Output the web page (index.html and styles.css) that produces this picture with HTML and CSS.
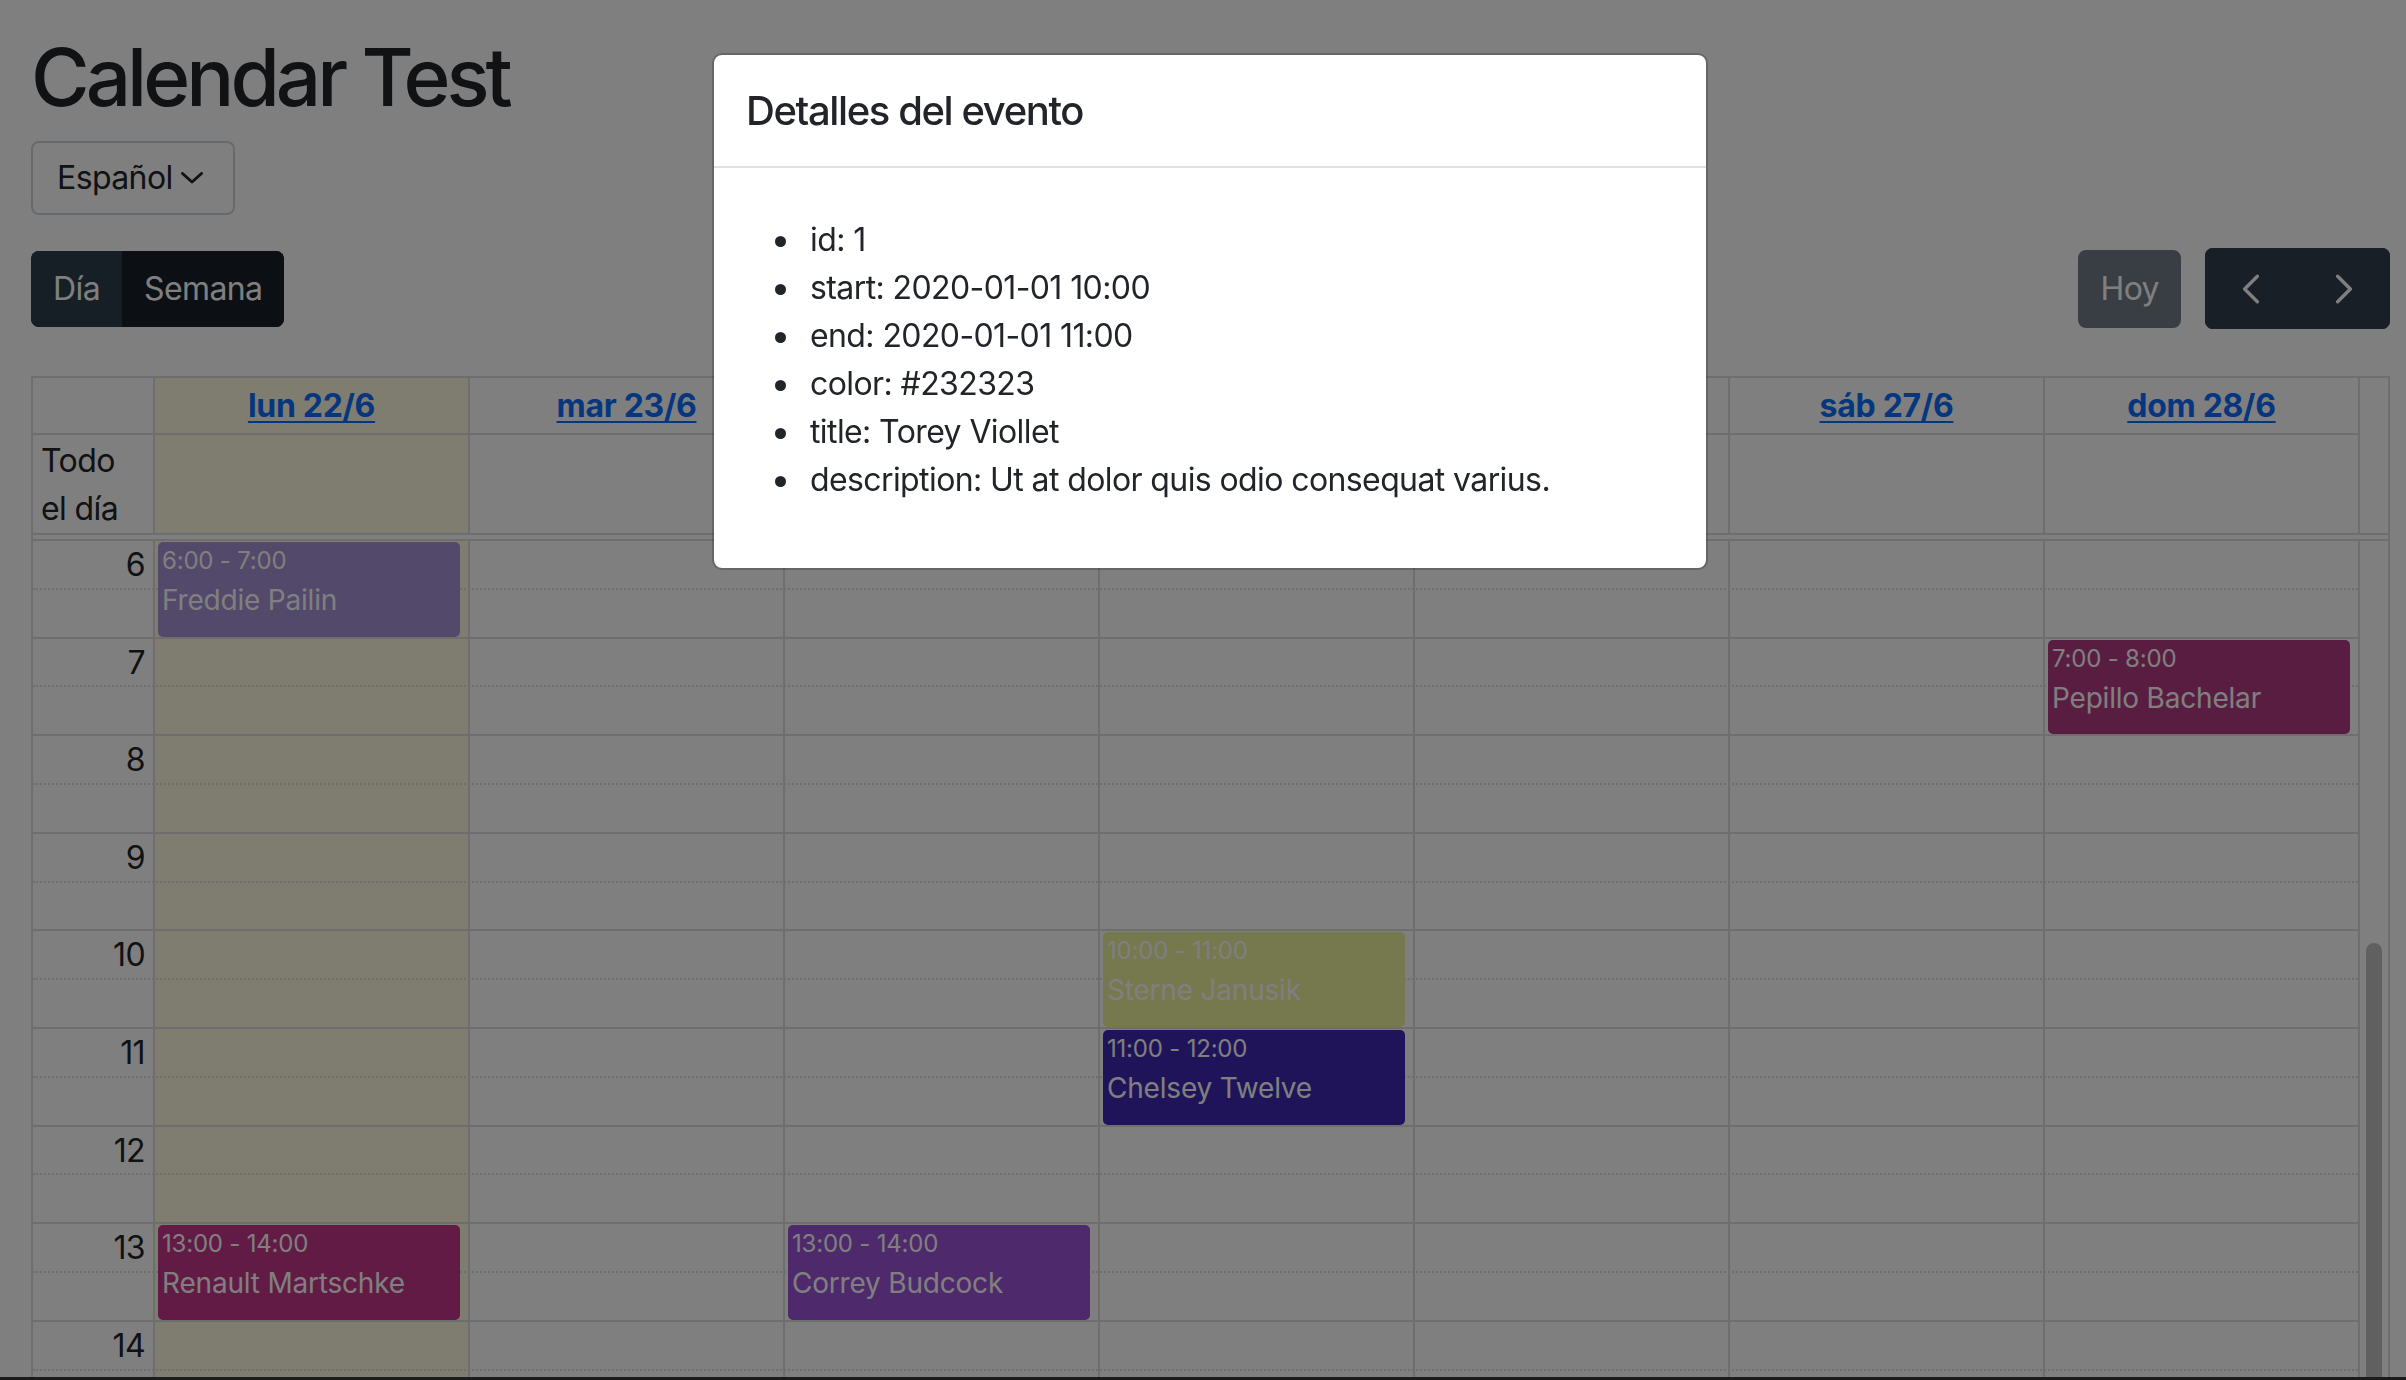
FILE: index.html
```html
<!DOCTYPE html>
<html lang="es">
<head>
<meta charset="utf-8">
<title>Calendar Test</title>
<link rel="stylesheet" href="styles.css">
</head>
<body>
<div class="page">
  <h1 class="title">Calendar Test</h1>
  <div class="select">
    <span>Español</span>
    <svg class="select-chevron" width="22" height="12" viewBox="0 0 22 12"><polyline points="1.5,1.5 11,10 20.5,1.5" fill="none" stroke="#212529" stroke-width="3" stroke-linecap="round" stroke-linejoin="round"/></svg>
  </div>

  <div class="toolbar">
    <div class="btn-group">
      <button class="btn btn-day">Día</button>
      <button class="btn btn-week">Semana</button>
    </div>
    <div class="toolbar-right">
      <button class="btn btn-today">Hoy</button>
      <div class="btn-group nav-group">
        <button class="btn btn-nav" aria-label="Anterior">
          <svg width="34" height="34" viewBox="0 0 16 16"><path fill="#fff" stroke="#fff" stroke-width="0.6" d="M11.354 1.646a.5.5 0 0 1 0 .708L5.707 8l5.647 5.646a.5.5 0 0 1-.708.708l-6-6a.5.5 0 0 1 0-.708l6-6a.5.5 0 0 1 .708 0z"/></svg>
        </button>
        <button class="btn btn-nav" aria-label="Siguiente">
          <svg width="34" height="34" viewBox="0 0 16 16"><path fill="#fff" stroke="#fff" stroke-width="0.6" d="M4.646 1.646a.5.5 0 0 1 .708 0l6 6a.5.5 0 0 1 0 .708l-6 6a.5.5 0 0 1-.708-.708L10.293 8 4.646 2.354a.5.5 0 0 1 0-.708z"/></svg>
        </button>
      </div>
    </div>
  </div>

  <div class="cal">
    <div class="cal-row cal-head">
      <div class="hcell corner"></div>
      <div class="hcell day today"><a href="#">lun 22/6</a></div>
      <div class="hcell day"><a href="#">mar 23/6</a></div>
      <div class="hcell day"><a href="#">mié 24/6</a></div>
      <div class="hcell day"><a href="#">jue 25/6</a></div>
      <div class="hcell day"><a href="#">vie 26/6</a></div>
      <div class="hcell day"><a href="#">sáb 27/6</a></div>
      <div class="hcell day"><a href="#">dom 28/6</a></div>
      <div class="hcell gutter"></div>
    </div>
    <div class="cal-row cal-allday">
      <div class="acell allday-label">Todo<br>el día</div>
      <div class="acell day today"></div>
      <div class="acell day"></div>
      <div class="acell day"></div>
      <div class="acell day"></div>
      <div class="acell day"></div>
      <div class="acell day"></div>
      <div class="acell day"></div>
      <div class="acell gutter"></div>
    </div>
    <div class="cal-divider"></div>
    <div class="cal-body">
      <div class="col k1"></div>
      <div class="col k2 today"></div>
      <div class="col k3"></div>
      <div class="col k4"></div>
      <div class="col k5"></div>
      <div class="col k6"></div>
      <div class="col k7"></div>
      <div class="col k8"></div>

      <div class="slots">
        <div class="slot"></div><div class="slot"></div>
        <div class="slot"></div><div class="slot"></div>
        <div class="slot"></div><div class="slot"></div>
        <div class="slot"></div><div class="slot"></div>
        <div class="slot"></div><div class="slot"></div>
        <div class="slot"></div><div class="slot"></div>
        <div class="slot"></div><div class="slot"></div>
        <div class="slot"></div><div class="slot"></div>
        <div class="slot"></div><div class="slot"></div>
      </div>

      <div class="times">
        <div class="hour">6</div>
        <div class="hour">7</div>
        <div class="hour">8</div>
        <div class="hour">9</div>
        <div class="hour">10</div>
        <div class="hour">11</div>
        <div class="hour">12</div>
        <div class="hour">13</div>
        <div class="hour">14</div>
      </div>

      <div class="event d1 at6 ev-lilac"><div class="ev-time">6:00 - 7:00</div><div class="ev-title">Freddie Pailin</div></div>
      <div class="event d7 at7 ev-plum"><div class="ev-time">7:00 - 8:00</div><div class="ev-title">Pepillo Bachelar</div></div>
      <div class="event d4 at10 ev-lime"><div class="ev-time">10:00 - 11:00</div><div class="ev-title">Sterne Janusik</div></div>
      <div class="event d4 at11 ev-indigo"><div class="ev-time">11:00 - 12:00</div><div class="ev-title">Chelsey Twelve</div></div>
      <div class="event d1 at13 ev-magenta"><div class="ev-time">13:00 - 14:00</div><div class="ev-title">Renault Martschke</div></div>
      <div class="event d3 at13 ev-violet"><div class="ev-time">13:00 - 14:00</div><div class="ev-title">Correy Budcock</div></div>

      <div class="gutter-body"><div class="thumb"></div></div>
    </div>
  </div>
</div>

<div class="backdrop"></div>
<div class="modal">
  <div class="modal-header">
    <h5 class="modal-title">Detalles del evento</h5>
  </div>
  <div class="modal-body">
    <ul class="detail-list">
      <li>id: 1</li>
      <li>start: 2020-01-01 10:00</li>
      <li>end: 2020-01-01 11:00</li>
      <li>color: #232323</li>
      <li>title: Torey Viollet</li>
      <li>description: Ut at dolor quis odio consequat varius.</li>
    </ul>
  </div>
</div>
<div class="window-edge"></div>
</body>
</html>
```

FILE: styles.css
```css
* { box-sizing: border-box; }

html, body {
  margin: 0;
  height: 100%;
  overflow: hidden;
}

body {
  font-family: Inter, "Noto Sans", "Liberation Sans", sans-serif;
  font-size: 32px;
  line-height: 1.5;
  letter-spacing: -0.6px;
  color: #212529;
  background: #fff;
}

.page {
  padding: 29px 16px 0 31px;
}

.title {
  margin: 0 0 16px;
  font-size: 80px;
  font-weight: 500;
  line-height: 1.2;
  letter-spacing: -4px;
}

/* select */
.select {
  display: inline-flex;
  align-items: center;
  gap: 8px;
  height: 74px;
  padding: 0 30px 0 24px;
  border: 2px solid #ced4da;
  border-radius: 8px;
  background: #fff;
}
.select-chevron { display: block; }

/* toolbar */
.toolbar {
  display: flex;
  align-items: center;
  justify-content: space-between;
  height: 81px;
  margin-top: 33px;
}
.toolbar-right {
  display: flex;
  align-items: center;
  gap: 24px;
}
.btn-group {
  display: flex;
  border-radius: 8px;
  overflow: hidden;
}
.btn {
  font: inherit;
  letter-spacing: inherit;
  color: #fff;
  border: 2px solid transparent;
  margin: 0;
  padding: 12px 20px;
  line-height: 1.5;
  background: #212529;
  cursor: pointer;
}
.btn-day { background: #2c3c4c; border-color: #2c3c4c; }
.btn-week { background: #182028; border-color: #182028; }
.btn-today {
  background: #737b88;
  border-color: #737b88;
  border-radius: 8px;
  height: 78px;
  padding: 0 20px;
}
.nav-group { height: 81px; }
.btn-nav {
  display: flex;
  align-items: center;
  justify-content: center;
  width: 92.5px;
  padding: 0;
  background: #303e4e;
  border-color: #303e4e;
}
.btn-nav svg { display: block; }

/* calendar */
.cal {
  margin-top: 47px;
  width: 2359px;
  border: 2px solid #ddd;
  border-bottom: 0;
}
.cal-row,
.cal-body {
  display: grid;
  grid-template-columns: 120px repeat(7, 315px) 30px;
}

.hcell {
  border-bottom: 2px solid #ddd;
  padding: 4px 0 3px;
  text-align: center;
  min-height: 57px;
}
.hcell.day,
.hcell.gutter,
.acell.day,
.acell.gutter { border-left: 2px solid #ddd; }
.hcell.gutter { border-bottom: 0; }
.hcell a {
  color: #0d6efd;
  font-weight: 700;
  letter-spacing: -0.3px;
  text-decoration: underline;
  text-underline-offset: 4px;
  text-decoration-thickness: 2px;
}
.today { background: rgba(255, 220, 40, 0.15); }

.cal-allday { border-bottom: 2px solid #ddd; }
.acell { min-height: 98px; }
.allday-label { padding: 2px 0 0 8px; }

.cal-divider {
  height: 6px;
  background: #fff;
  border-bottom: 2px solid #ddd;
}

.cal-body {
  grid-template-rows: repeat(18, 48.8px);
}
.col { grid-row: 1 / -1; }
.k1 { grid-column: 1; }
.k2 { grid-column: 2; }
.k3 { grid-column: 3; }
.k4 { grid-column: 4; }
.k5 { grid-column: 5; }
.k6 { grid-column: 6; }
.k7 { grid-column: 7; }
.k8 { grid-column: 8; }
.col.k2, .col.k3, .col.k4, .col.k5, .col.k6, .col.k7, .col.k8 {
  border-left: 2px solid #ddd;
}

.slots {
  grid-column: 1 / 9;
  grid-row: 1 / -1;
  display: flex;
  flex-direction: column;
}
.slot {
  height: 48.8px;
  flex: none;
  border-bottom: 2px dotted #ddd;
}
.slot:nth-child(even) { border-bottom-style: solid; }

.times {
  grid-column: 1;
  grid-row: 1 / -1;
  display: flex;
  flex-direction: column;
}
.hour {
  height: 97.6px;
  flex: none;
  text-align: right;
  padding-right: 8px;
  line-height: 48px;
}

/* events */
.event {
  margin: 1px 8px 2px 5px;
  border-radius: 5px;
  padding: 1px 4px;
  color: #fff;
  overflow: hidden;
  letter-spacing: -0.2px;
}
.ev-time { font-size: 24px; line-height: 36px; }
.ev-title { font-size: 28px; line-height: 42px; }

.d1 { grid-column: 2; }
.d3 { grid-column: 4; }
.d4 { grid-column: 5; }
.d7 { grid-column: 8; }
.at6 { grid-row: 1 / span 2; }
.at7 { grid-row: 3 / span 2; }
.at10 { grid-row: 9 / span 2; }
.at11 { grid-row: 11 / span 2; }
.at13 { grid-row: 15 / span 2; }

.ev-lilac { background: #a692d4; }
.ev-plum { background: #b43a84; }
.ev-lime { background: #ecf09c; }
.ev-indigo { background: #3e28b2; }
.ev-magenta { background: #c4368a; }
.ev-violet { background: #9c52d6; }

.gutter-body {
  grid-column: 9;
  grid-row: 1 / -1;
  border-left: 2px solid #ddd;
  padding: 402px 0 0 6px;
}
.thumb {
  width: 16px;
  height: 600px;
  border-radius: 8px;
  background: #c1c1c1;
}

/* modal */
.backdrop {
  position: fixed;
  inset: 0;
  background: rgba(0, 0, 0, 0.5);
}
.modal {
  position: fixed;
  top: 53px;
  left: 712px;
  width: 996px;
  background: #fff;
  border: 2px solid rgba(0, 0, 0, 0.2);
  border-radius: 10px;
  background-clip: padding-box;
}
.modal-header {
  padding: 32px 32px 31px;
  border-bottom: 2px solid #dee2e6;
}
.modal-title {
  margin: 0;
  font-size: 40px;
  font-weight: 500;
  line-height: 1.2;
  letter-spacing: -1.4px;
}
.modal-body {
  padding: 48px 32px 32px;
}
.detail-list {
  list-style: none;
  margin: 0 0 32px;
  padding-left: 64px;
}
.detail-list li::before {
  content: "";
  display: inline-block;
  width: 11px;
  height: 11px;
  border-radius: 50%;
  background: #212529;
  margin-left: -35px;
  margin-right: 24px;
  vertical-align: 4px;
}

.window-edge {
  position: fixed;
  left: 0;
  right: 0;
  bottom: 0;
  height: 3px;
  background: #1c1c1c;
}
```
